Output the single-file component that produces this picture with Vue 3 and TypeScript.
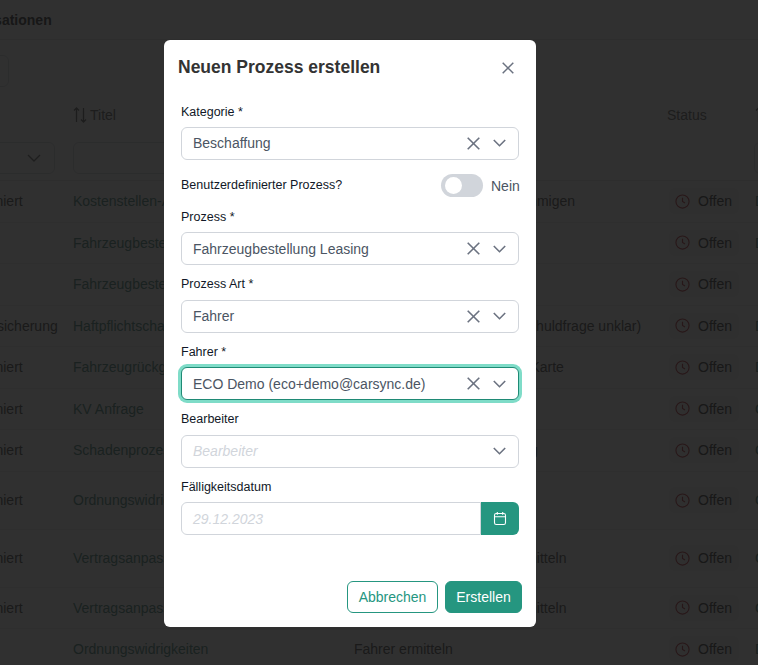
<script setup lang="ts">
interface Row { a: string; b: string; c: string; d: string; tall?: boolean }
const rows: Row[] = [
  { a: 'Koordiniert', b: 'Kostenstellen-Änderung', c: 'Kostenstellenzuteilung genehmigen', d: 'Demo' },
  { a: '', b: 'Fahrzeugbestellung Leasing', c: '', d: 'Demo' },
  { a: '', b: 'Fahrzeugbestellung Kauf', c: '', d: '' },
  { a: 'Kfz-Absicherung', b: 'Haftpflichtschaden', c: 'Haftpflichtschaden klären (Schuldfrage unklar)', d: 'Demo' },
  { a: 'Koordiniert', b: 'Fahrzeugrückgabe', c: 'Rückgabe Tank- und Dienst-Karte', d: 'Demo' },
  { a: 'Koordiniert', b: 'KV Anfrage', c: '', d: 'Offen' },
  { a: 'Koordiniert', b: 'Schadenprozess', c: 'Schadenprozess Bearbeitung', d: 'Offen' },
  { a: 'Koordiniert', b: 'Ordnungswidrigkeiten', c: '', d: 'Offen', tall: true },
  { a: 'Koordiniert', b: 'Vertragsanpassung', c: 'Vertragspartner & Fahrer ermitteln', d: 'Offen', tall: true },
  { a: 'Koordiniert', b: 'Vertragsanpassung', c: 'Vertragspartner & Fahrer ermitteln', d: 'Offen' },
  { a: '', b: 'Ordnungswidrigkeiten', c: 'Fahrer ermitteln', d: 'Demo' },
]
</script>

<template>
  <div class="page">
    <div class="bg">
      <div class="topbar">Organisationen</div>
      <div class="toolbar"><div class="ghost-btn"></div></div>
      <div class="grid head">
        <span></span>
        <span class="sort-title">
          <svg width="14" height="16" viewBox="0 0 14 16" fill="none" stroke="currentColor" stroke-width="1.3">
            <path d="M3.5 15V1M1 3.5 3.5 1 6 3.5M10.500 1v14M8 12.500l2.500 2.500 2.500-2.500" />
          </svg>
          Titel
        </span>
        <span></span>
        <span>Status</span>
        <span class="sort-title">
          <svg width="14" height="16" viewBox="0 0 14 16" fill="none" stroke="currentColor" stroke-width="1.3">
            <path d="M3.500 15V1M1 3.500 3.500 1 6 3.500" />
          </svg>
        </span>
      </div>
      <div class="grid filters">
        <div class="filter-cell first">
          <svg width="14" height="8" viewBox="0 0 14 8" fill="none" stroke="currentColor" stroke-width="1.4"><path d="m1 1 6 6 6-6" /></svg>
        </div>
        <div class="filter-cell second"></div>
        <span></span>
        <span></span>
        <div class="filter-cell last"></div>
      </div>
      <div v-for="(r, i) in rows" :key="i" class="grid row" :class="{ tall: r.tall }">
        <span class="nowrap cell-a">{{ r.a }}</span>
        <span class="link nowrap">{{ r.b }}</span>
        <span class="nowrap">{{ r.c }}</span>
        <span>
          <span class="badge">
            <svg width="15" height="15" viewBox="0 0 24 24" fill="none" stroke="currentColor" stroke-width="1.800">
              <circle cx="12" cy="12" r="10.500" />
              <path d="M12 6v6l4 2.500" />
            </svg>
            <span>Offen</span>
          </span>
        </span>
        <span class="link nowrap">{{ r.d }}</span>
      </div>
    </div>

    <div class="overlay">
      <section class="modal">
        <header class="modal-head">
          <h2>Neuen Prozess erstellen</h2>
          <button class="close" aria-label="Schließen">
            <svg width="12" height="12" viewBox="0 0 12 12" fill="none" stroke="currentColor" stroke-width="1.500"><path d="m.7.7 10.600 10.600M11.300.7.700 11.300" /></svg>
          </button>
        </header>

        <div class="modal-body">
          <div class="group">
            <label>Kategorie *</label>
            <div class="select">
              <span class="value">Beschaffung</span>
              <svg class="x" width="13" height="13" viewBox="0 0 13 13" fill="none" stroke="currentColor" stroke-width="1.600"><path d="m.7.7 11.600 11.600M12.300.7.700 12.300" /></svg>
              <svg class="chev" width="13" height="8" viewBox="0 0 13 8" fill="none" stroke="currentColor" stroke-width="1.600"><path d="m.8 1 5.700 5.700L12.200 1" /></svg>
            </div>
          </div>

          <div class="toggle-row">
            <span class="toggle-label">Benutzerdefinierter Prozess?</span>
            <span class="switch"><span class="knob"></span></span>
            <span class="toggle-state">Nein</span>
          </div>

          <div class="group">
            <label>Prozess *</label>
            <div class="select">
              <span class="value">Fahrzeugbestellung Leasing</span>
              <svg class="x" width="13" height="13" viewBox="0 0 13 13" fill="none" stroke="currentColor" stroke-width="1.600"><path d="m.7.7 11.600 11.600M12.300.7.700 12.300" /></svg>
              <svg class="chev" width="13" height="8" viewBox="0 0 13 8" fill="none" stroke="currentColor" stroke-width="1.600"><path d="m.8 1 5.700 5.700L12.200 1" /></svg>
            </div>
          </div>

          <div class="group">
            <label>Prozess Art *</label>
            <div class="select">
              <span class="value">Fahrer</span>
              <svg class="x" width="13" height="13" viewBox="0 0 13 13" fill="none" stroke="currentColor" stroke-width="1.600"><path d="m.7.7 11.600 11.600M12.300.7.700 12.300" /></svg>
              <svg class="chev" width="13" height="8" viewBox="0 0 13 8" fill="none" stroke="currentColor" stroke-width="1.600"><path d="m.8 1 5.700 5.700L12.200 1" /></svg>
            </div>
          </div>

          <div class="group">
            <label>Fahrer *</label>
            <div class="select focused">
              <span class="value">ECO Demo (eco+demo@carsync.de)</span>
              <svg class="x" width="13" height="13" viewBox="0 0 13 13" fill="none" stroke="currentColor" stroke-width="1.600"><path d="m.7.7 11.600 11.600M12.300.7.700 12.300" /></svg>
              <svg class="chev" width="13" height="8" viewBox="0 0 13 8" fill="none" stroke="currentColor" stroke-width="1.600"><path d="m.8 1 5.700 5.700L12.200 1" /></svg>
            </div>
          </div>

          <div class="group">
            <label>Bearbeiter</label>
            <div class="select">
              <span class="value placeholder">Bearbeiter</span>
              <svg class="chev" width="13" height="8" viewBox="0 0 13 8" fill="none" stroke="currentColor" stroke-width="1.600"><path d="m.8 1 5.700 5.700L12.200 1" /></svg>
            </div>
          </div>

          <div class="group">
            <label>Fälligkeitsdatum</label>
            <div class="date">
              <div class="date-input"><span class="value placeholder">29.12.2023</span></div>
              <div class="date-btn">
                <svg width="14" height="15" viewBox="0 0 14 15" fill="none" stroke="currentColor" stroke-width="1.100">
                  <rect x="1.500" y="2.500" width="11" height="11" rx="1.800" />
                  <path d="M1.500 5.700h11M4.300 1v2.800M9.700 1v2.800" />
                </svg>
              </div>
            </div>
          </div>
        </div>

        <footer class="modal-foot">
          <button class="btn outline">Abbrechen</button>
          <button class="btn solid">Erstellen</button>
        </footer>
      </section>
    </div>
  </div>
</template>

<style>
html, body { margin: 0; overflow: hidden; background: #fff; }
</style>

<style scoped>
.page {
  position: relative;
  width: 758px;
  height: 665px;
  overflow: hidden;
  font-family: "Liberation Sans", Arial, sans-serif;
  font-size: 14px;
}
.bg { width: 758px; color: #8a8a8a; }
.topbar {
  height: 39px;
  line-height: 40px;
  border-bottom: 1px solid #f0f0f0;
  margin-left: -51px;
  font-weight: 700;
  color: #7a7a7a;
}
.toolbar { padding-top: 15px; box-sizing: border-box; height: 58px; }
.ghost-btn {
  width: 60px;
  height: 32px;
  margin-left: -51px;
  border: 1px solid #e5e7eb;
  border-radius: 6px;
  box-sizing: border-box;
}
.grid {
  display: grid;
  grid-template-columns: 121px 281px 313px 88px 120px;
  margin-left: -48px;
  width: 923px;
  align-items: center;
}
.head { height: 33px; color: #9a9a9a; }
.sort-title { display: inline-flex; align-items: center; gap: 3px; }
.filters {
  height: 50px;
  border-bottom: 1px solid #eeeeee;
  box-sizing: border-box;
  padding-top: 11px;
  align-items: start;
}
.filter-cell { height: 32px; border: 1px solid #e5e7eb; border-radius: 6px; box-sizing: border-box; }
.first { width: 103px; display: flex; align-items: center; justify-content: flex-end; padding-right: 13px; color: #a0a0a0; }
.second { width: 270px; }
.last { margin-left: -1px; }
.row {
  height: 41.5px;
  border-bottom: 1px solid #f3f3f3;
  box-sizing: border-box;
}
.tall { height: 58px; }
.nowrap { white-space: nowrap; }
.cell-a { padding-left: 3px; }
.link { color: #8ab0a8; }
.badge {
  display: inline-flex;
  align-items: center;
  gap: 8px;
  height: 26px;
  width: 70px;
  margin-left: 2px;
  padding-left: 6px;
  box-sizing: border-box;
  border-radius: 6px;
  background: #f8f8f8;
  color: #cf7a80;
}
.badge span { color: #808080; }

.overlay {
  position: absolute;
  inset: 0;
  background: rgba(0, 0, 0, 0.81);
  padding: 40px 0 0 164px;
  box-sizing: border-box;
}
.modal {
  width: 372px;
  height: 587px;
  background: #fff;
  border-radius: 6px;
  box-sizing: border-box;
  display: flex;
  flex-direction: column;
  color: #111827;
}
.modal-head {
  display: flex;
  align-items: center;
  justify-content: space-between;
  height: 54px;
  padding: 0 22px 0 14px;
  margin-bottom: 10.25px;
}
h2 {
  margin: 0;
  font-size: 17.5px;
  font-weight: 700;
  color: #333;
}
.close {
  display: flex;
  padding: 0;
  border: 0;
  background: none;
  color: #6b7280;
  margin-top: 2px;
}
.modal-body {
  flex: 1;
  padding: 0 17px;
  display: flex;
  flex-direction: column;
  gap: 10px;
}
label, .toggle-label {
  display: block;
  font-size: 12.5px;
  line-height: 17.5px;
  color: #111827;
}
label { margin-bottom: 6px; }
.group:first-child label { margin-bottom: 5px; }
.group + .group, .toggle-row + .group { padding-top: 1px; }
.select {
  height: 33px;
  border: 1px solid #d1d5db;
  border-radius: 6px;
  box-sizing: border-box;
  display: flex;
  align-items: center;
  padding: 0 12px 0 11px;
  background: #fff;
  color: #6b7280;
}
.value { flex: 1; color: #4b5563; white-space: nowrap; }
.placeholder { color: #d1d5db; font-style: italic; }
.x { margin-right: 13px; }
.focused {
  border-color: #1f8a75;
  box-shadow: 0 0 0 3px #7fdcc8;
}
.toggle-row {
  display: flex;
  align-items: center;
  height: 24px;
  margin-top: 3.75px;
}
.toggle-label { flex: 1; }
.switch {
  width: 42px;
  height: 23px;
  border-radius: 12px;
  background: #d1d5db;
  display: flex;
  align-items: center;
  padding-left: 4px;
  box-sizing: border-box;
}
.knob { width: 17px; height: 17px; border-radius: 50%; background: #fff; }
.toggle-state { margin-left: 8px; width: 28px; white-space: nowrap; color: #4b5563; }
.date { display: flex; height: 33px; }
.date-input {
  flex: 1;
  border: 1px solid #d1d5db;
  border-radius: 6px 0 0 6px;
  box-sizing: border-box;
  display: flex;
  align-items: center;
  padding-left: 11px;
}
.date-btn {
  width: 38px;
  background: #259680;
  color: #fff;
  border-radius: 0 6px 6px 0;
  display: flex;
  align-items: center;
  justify-content: center;
}
.modal-foot {
  display: flex;
  justify-content: flex-end;
  gap: 7px;
  padding: 0 14px 14px;
}
.btn {
  height: 32px;
  border-radius: 6px;
  font: 14px "Liberation Sans", Arial, sans-serif;
  box-sizing: border-box;
  padding: 0;
}
.outline { width: 91px; background: #fff; border: 1px solid #259680; color: #259680; }
.solid { width: 77px; background: #259680; border: 1px solid #259680; color: #fff; }
</style>
